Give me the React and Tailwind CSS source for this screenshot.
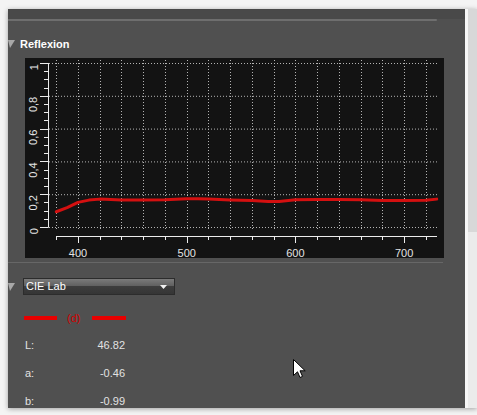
const X = (l) => 53 + (l - 400) * 1.087;
const Y = (v) => 169 - v * 164;

const curve = [
  [380, 0.093], [390, 0.118], [400, 0.15], [410, 0.164], [420, 0.17], [430, 0.168],
  [440, 0.165], [460, 0.165], [480, 0.166], [500, 0.172], [510, 0.173], [520, 0.17],
  [540, 0.165], [560, 0.162], [575, 0.155], [585, 0.156], [600, 0.166], [620, 0.167],
  [640, 0.167], [660, 0.166], [680, 0.161], [700, 0.161], [720, 0.163], [730, 0.17],
];

function Chart() {
  const yTicks = Array.from({ length: 21 }, (_, i) => i);
  const xTicks = Array.from({ length: 18 }, (_, i) => 380 + i * 20);
  const yLabels = [
    [0, '0'], [0.2, '0,2'], [0.4, '0,4'], [0.6, '0,6'], [0.8, '0,8'], [1, '1'],
  ];
  return (
    <svg width="419" height="200" className="block">
      <rect width="419" height="200" fill="#131313" />
      {yLabels.map(([v]) => (
        <line key={'h' + v} x1="24" x2="412" y1={Y(v) + 0.5} y2={Y(v) + 0.5}
          stroke="#b4b4b4" strokeDasharray="1 2" />
      ))}
      {xTicks.map((l) => (
        <line key={'v' + l} x1={Math.round(X(l)) + 0.5} x2={Math.round(X(l)) + 0.5} y1="2" y2="173"
          stroke="#b4b4b4" strokeDasharray="1 2" />
      ))}
      <line x1="23.5" x2="23.5" y1="5" y2="169.5" stroke="#ececec" />
      {yTicks.map((i) => {
        const y = Math.round(Y(i * 0.05)) + 0.5;
        return <line key={'yt' + i} x1={i % 4 === 0 ? 15 : 19} x2="23.5" y1={y} y2={y} stroke="#ececec" />;
      })}
      {yLabels.map(([v, t]) => (
        <text key={'yl' + v} x="12.5" y={Y(v) + 1} transform={`rotate(-90 12.5 ${Y(v) + 1})`}
          textAnchor="end" fontSize="11" fill="#e4e4e4" fontFamily="Liberation Sans, sans-serif">{t}</text>
      ))}
      <line x1="31" x2="412" y1="178.5" y2="178.5" stroke="#ececec" />
      {xTicks.map((l) => {
        const x = Math.round(X(l)) + 0.5;
        return <line key={'xt' + l} x1={x} x2={x} y1="178.5" y2={l % 100 === 0 ? 185 : 182} stroke="#ececec" />;
      })}
      {[400, 500, 600, 700].map((l) => (
        <text key={'xl' + l} x={X(l)} y="198.5" textAnchor="middle" fontSize="11" fill="#e4e4e4"
          fontFamily="Liberation Sans, sans-serif">{l}</text>
      ))}
      <polyline points={curve.map(([l, v]) => `${X(l)},${Y(v)}`).join(' ')} fill="none"
        stroke="#d41010" strokeWidth="3" strokeLinejoin="round" strokeLinecap="round" />
    </svg>
  );
}

function Caret() {
  return (
    <svg width="7" height="8" className="block shrink-0">
      <polygon points="0,0 7,0 2,8" fill="#a8a8a8" />
    </svg>
  );
}

function Row({ label, value }) {
  return (
    <div className="ml-[17px] flex h-[28px] w-[100px] items-center justify-between text-[11px] text-[#e2e2e2]">
      <span>{label}</span>
      <span>{value}</span>
    </div>
  );
}

export default function App() {
  return (
    <div className="relative flex h-[415px] w-[477px] overflow-hidden bg-[#f4f4f4] pl-[8px] pt-[9px] font-['Liberation_Sans',sans-serif]">
      <div className="flex h-[399px] shadow-[0_1px_5px_rgba(0,0,0,0.35)]">
        <div className="w-[457px] overflow-hidden bg-[#505050]">
          <div className="h-[10px] bg-[#494949]" />
          <div className="h-[2px] w-[429px] rounded-r-full bg-[#6e6e6e]" />

          <div className="mt-[15px] flex h-[16px] items-center">
            <Caret />
            <span className="ml-[5px] text-[11px] font-bold text-white">Reflexion</span>
          </div>

          <div className="ml-[17px] mt-[6px]">
            <Chart />
          </div>

          <div className="mt-[4px] h-px w-[435px] bg-[#676767]" />

          <div className="mt-[15px] flex items-center">
            <Caret />
            <div className="ml-[8px] flex h-[17px] w-[152px] items-center justify-between border border-[#2c2c2c] bg-[linear-gradient(to_bottom,#7a7a7a,#5e5e5e_50%,#3d3d3d_50%,#353535)] pl-[2px] pr-[7px]">
              <span className="text-[11px] text-white">CIE Lab</span>
              <svg width="7" height="4" className="block">
                <polygon points="0,0 7,0 3.5,4" fill="#f2f2f2" />
              </svg>
            </div>
          </div>

          <div className="ml-[16px] mt-[18px] flex h-[10px] items-center">
            <div className="h-[4px] w-[33px] bg-[#e80000]" />
            <span className="ml-[10px] w-[14px] text-[11px] leading-none text-[#d00000]">(d)</span>
            <div className="ml-[11px] h-[4px] w-[34px] bg-[#e80000]" />
          </div>

          <div className="mt-[8px]">
            <Row label="L:" value="46.82" />
            <Row label="a:" value="-0.46" />
            <Row label="b:" value="-0.99" />
          </div>
        </div>
        <div className="w-[3px] bg-[#f7f7f7]" />
        <div className="flex w-[9px] flex-col">
          <div className="h-[223px] bg-[#d8d8d8]" />
          <div className="flex-1 bg-[#ebebeb]" />
        </div>
      </div>

      <svg width="14" height="20" className="absolute left-[293px] top-[359px]">
        <path d="M0.5 0.5 L0.5 16.5 L4.5 12.8 L7 18.5 L9.5 17.4 L7 11.8 L12.2 11.8 Z" fill="#ffffff" stroke="#000000" strokeWidth="1" />
      </svg>
    </div>
  );
}
